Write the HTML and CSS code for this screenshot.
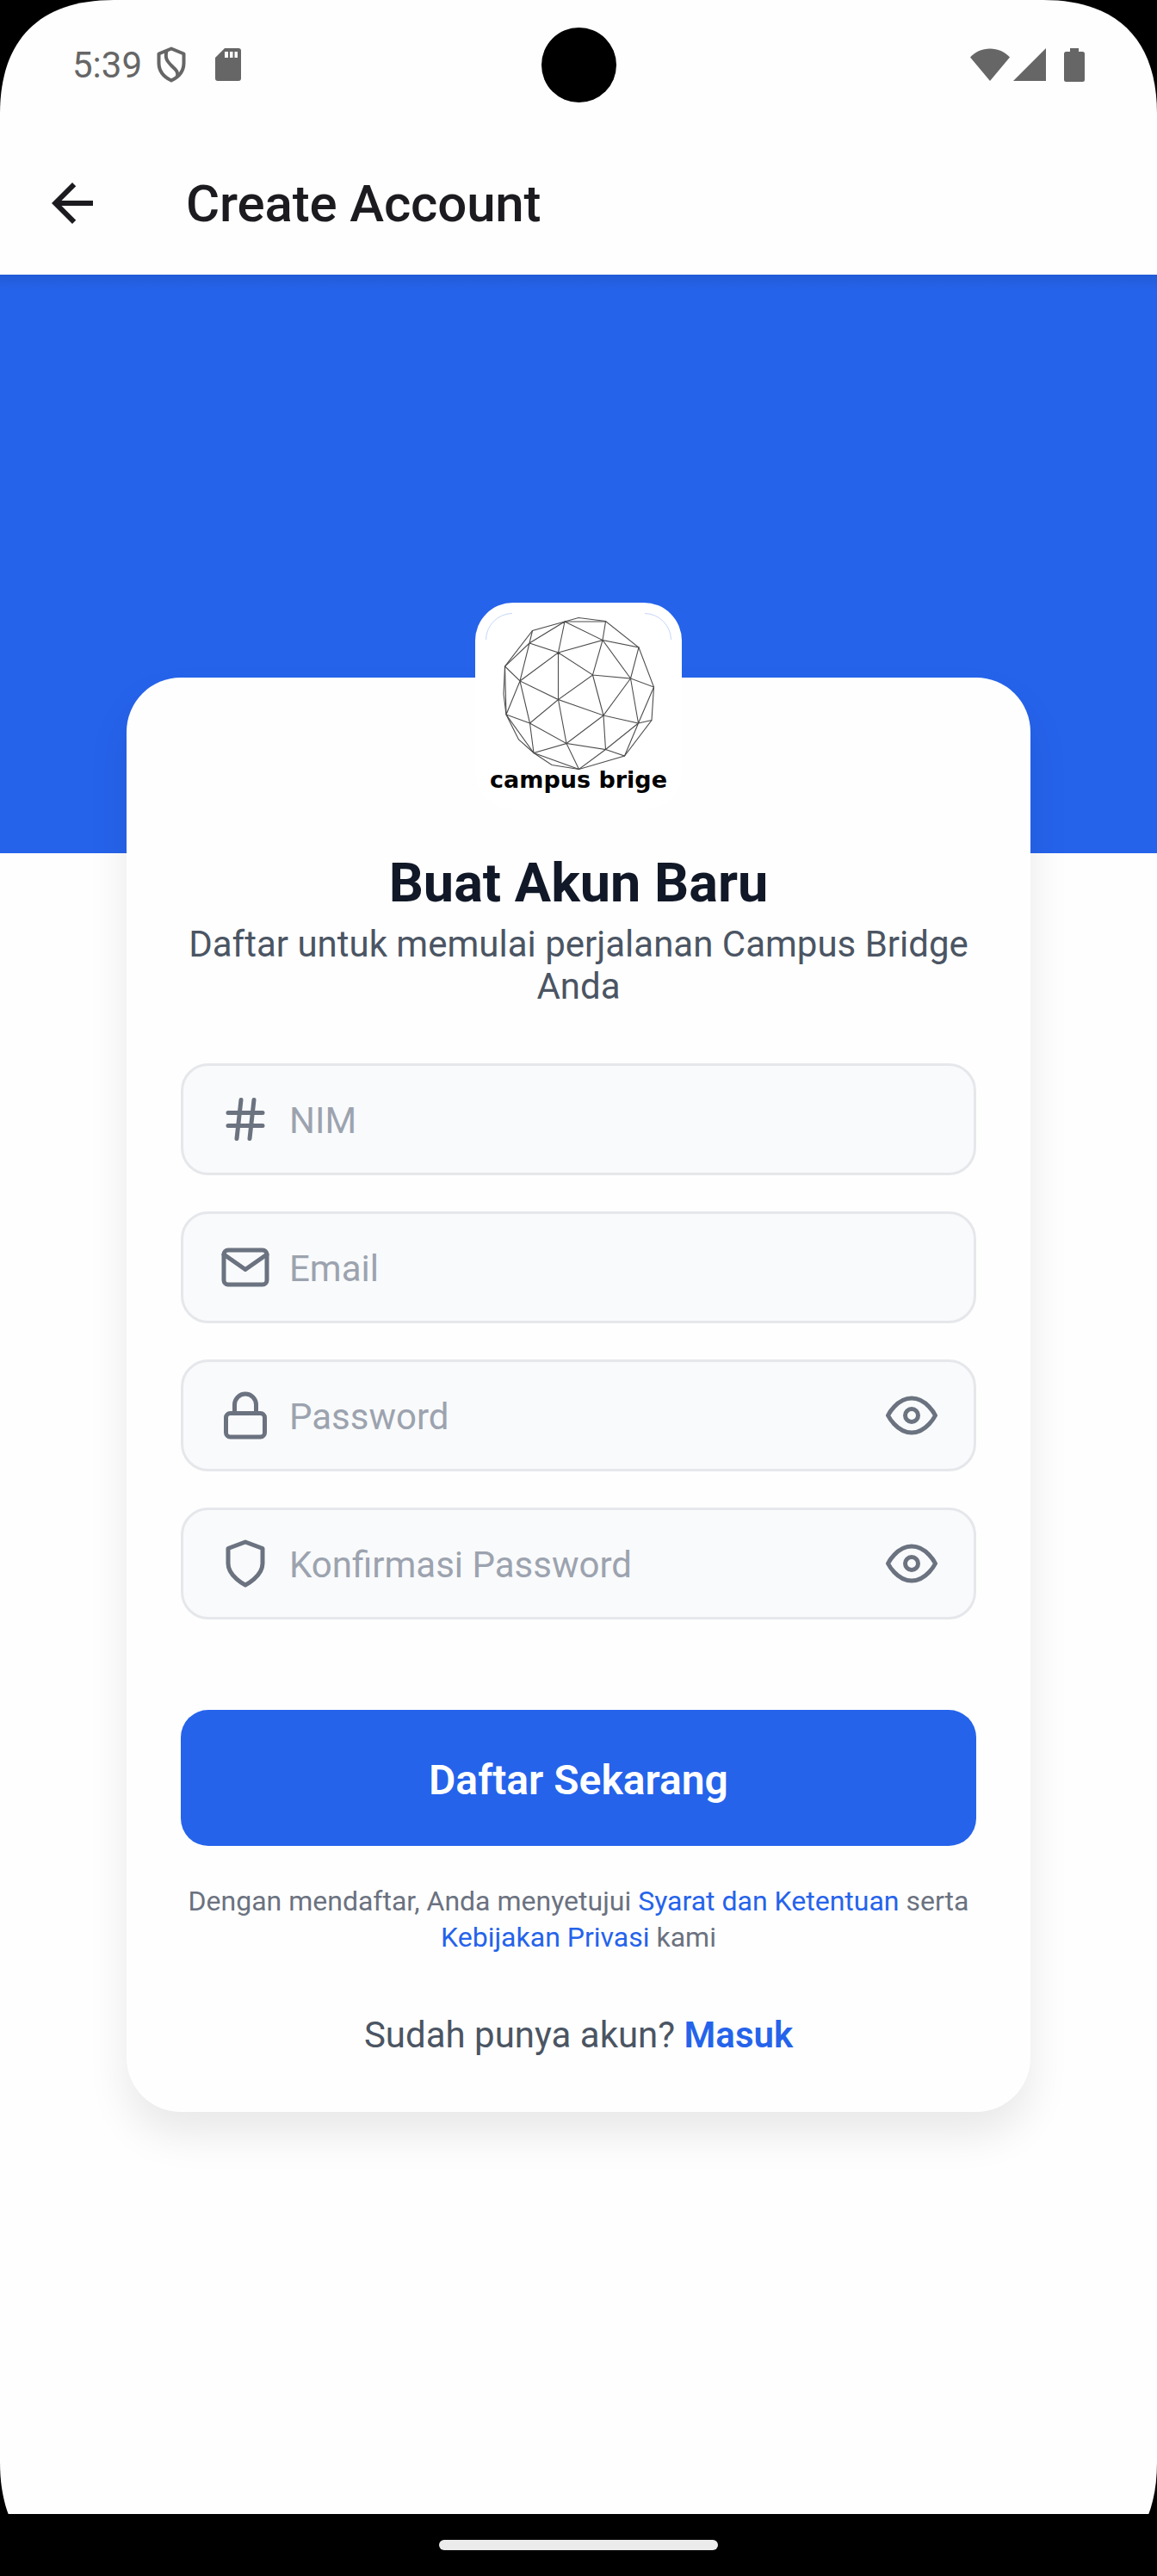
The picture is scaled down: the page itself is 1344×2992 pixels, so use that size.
FILE: index.html
```html
<!DOCTYPE html>
<html lang="id">
<head>
<meta charset="utf-8">
<title>Create Account</title>
<link rel="stylesheet" href="styles.css">
</head>
<body>
<div class="device">
<div class="screen">
  <header class="status-bar">
    <div class="status-left">
      <span class="clock">5:39</span>
      <svg class="status-shield" width="34" height="42" viewBox="0 0 34 42" fill="none" stroke="#666" stroke-width="4" stroke-linejoin="round"><path d="M17 2.500 31.500 8.500V19c0 9.500-6 16.500-14.500 20.500C8.500 35.500 2.500 28.500 2.500 19V8.500z"/><path d="M11.500 5c-2.500 10 2 13.500 7 18.500 4.500 4 6.500 6.500 5.500 11"/></svg>
      <svg class="status-sd" width="30" height="38" viewBox="0 0 30 38"><path fill="#666" d="M11 0h16a3 3 0 0 1 3 3v32a3 3 0 0 1-3 3H3a3 3 0 0 1-3-3V11z"/><path fill="#fefefe" d="M11 4h4v7h-4zM17 4h3.500v7H17zM22.500 4H26v7h-3.500z"/></svg>
    </div>
    <div class="status-right">
      <svg width="46" height="38" viewBox="0 0 46 38"><path fill="#666" d="M0 10.500C6 4 14 .5 23 .5s17 3.500 23 10L23 38z"/></svg>
      <svg width="38" height="38" viewBox="0 0 38 38"><path fill="#666" d="M38 0v38H0z"/></svg>
      <svg class="battery" width="24" height="39" viewBox="0 0 24 39"><path fill="#666" d="M7 0h10v4h4.500A2.500 2.500 0 0 1 24 6.500v30a2.500 2.500 0 0 1-2.500 2.500h-19A2.500 2.500 0 0 1 0 36.500v-30A2.500 2.500 0 0 1 2.500 4H7z"/></svg>
    </div>
    <div class="camera"></div>
  </header>
  <nav class="app-bar">
    <svg width="72" height="72" viewBox="0 0 24 24"><path fill="#1c1b1f" d="M20 11H7.830l5.590-5.590L12 4l-8 8 8 8 1.410-1.410L7.830 13H20v-2z"/></svg>
    <h1 class="app-title">Create Account</h1>
  </nav>
  <main class="content">
    <div class="hero"></div>
    <section class="card">
      <div class="logo">
        <svg width="240" height="240" viewBox="0 0 240 240">
          <path d="M12.500 43A31 31 0 0 1 43 12.500M197 12.500A31 31 0 0 1 227.500 43" fill="none" stroke="#c5d6fa"/>
          <g fill="none" stroke="#4d4d4d" stroke-width="1.100">
            <path d="M104 22 120 17.500 151.500 21.500 190 52 207.500 98 205 136.500 173.500 178 120.500 193.500 89 188.500 68 174.500 50.500 159 36 130 33 106 34.500 74 66.500 32.500z"/>
            <path d="M104 22H151.500L148 43.500 190 52 180.500 88 207.500 98 189.500 140 205 136.500M104 22 148 43.500 96.500 58 104 22 63 47 34.500 74 52 91 63 47 66.500 32.500M63 47 96.500 58 52 91 96.500 112.500V58L136.500 84 148 43.500 180.500 88 136.500 84 96.500 112.500 149 131 136.500 84M180.500 88 149 131 189.500 140zM149 131 106 163.500 96.500 112.500 63.500 140 52 91 36 130 63.500 140 106 163.500 68 174.500 63.500 140M149 131 151.500 170.500 106 163.500 120.500 193.500 151.500 170.500 189.500 140 173.500 178 151.500 170.500M120.500 193.500 68 174.500 36 130 34.500 74"/>
          </g>
          <text class="wordmark" x="17" y="215" textLength="206" lengthAdjust="spacingAndGlyphs">campus brige</text>
        </svg>
      </div>
      <h2 class="title">Buat Akun Baru</h2>
      <p class="subtitle">Daftar untuk memulai perjalanan Campus Bridge Anda</p>
      <div class="fields">
        <div class="field">
          <svg class="icon" viewBox="0 0 24 24"><path d="M4 9h16M4 15h16M10 3 8 21M16 3l-2 18"/></svg>
          <span class="placeholder">NIM</span>
        </div>
        <div class="field">
          <svg class="icon" viewBox="0 0 24 24"><path d="M4 4h16c1.100 0 2 .9 2 2v12c0 1.100-.9 2-2 2H4c-1.100 0-2-.9-2-2V6c0-1.100.9-2 2-2z"/><path d="m22 6-10 7L2 6"/></svg>
          <span class="placeholder">Email</span>
        </div>
        <div class="field">
          <svg class="icon" viewBox="0 0 24 24"><rect x="3" y="11" width="18" height="11" rx="2"/><path d="M7 11V7a5 5 0 0 1 10 0v4"/></svg>
          <span class="placeholder">Password</span>
          <svg class="icon" viewBox="0 0 24 24"><path d="M1 12s4-8 11-8 11 8 11 8-4 8-11 8-11-8-11-8z"/><circle cx="12" cy="12" r="3"/></svg>
        </div>
        <div class="field">
          <svg class="icon" viewBox="0 0 24 24"><path d="M12 22s8-4 8-10V5l-8-3-8 3v7c0 6 8 10 8 10z"/></svg>
          <span class="placeholder">Konfirmasi Password</span>
          <svg class="icon" viewBox="0 0 24 24"><path d="M1 12s4-8 11-8 11 8 11 8-4 8-11 8-11-8-11-8z"/><circle cx="12" cy="12" r="3"/></svg>
        </div>
      </div>
      <button class="submit">Daftar Sekarang</button>
      <p class="terms">Dengan mendaftar, Anda menyetujui <a>Syarat dan Ketentuan</a> serta<br><a>Kebijakan Privasi</a> kami</p>
      <p class="login">Sudah punya akun? <a>Masuk</a></p>
    </section>
  </main>
</div>
<footer class="gesture-bar"><div class="pill"></div></footer>
</div>
</body>
</html>
```

FILE: styles.css
```css
* { box-sizing: border-box; }
body { margin: 0; background: #000; font-family: Roboto, "Liberation Sans", sans-serif; }
h1, h2, p { margin: 0; }
svg { display: block; flex: none; }

/* Smoothed display corners */
.device { width: 1344px; height: 2992px; clip-path: path("M0 132C0 46 46 0 132 0H1212C1298 0 1344 46 1344 132V2860C1344 2946 1298 2992 1212 2992H132C46 2992 0 2946 0 2860Z"); background: #000; display: flex; flex-direction: column; }
.screen { flex: 1; background: #fefefe; display: flex; flex-direction: column; }

.status-bar { position: relative; height: 152px; padding: 0 84px; display: flex; justify-content: space-between; }
.status-left, .status-right { height: 150px; display: flex; align-items: center; }
.clock { width: 98px; padding-top: 2px; font-size: 42px; line-height: 50px; color: #666; }
.status-sd { margin-left: 34px; }
.status-right { gap: 4px; }
.battery { margin-left: 17px; }
.camera { position: absolute; left: 629px; top: 32px; width: 87px; height: 87px; border-radius: 50%; background: #000; }

.app-bar { height: 167px; padding: 0 48px; display: flex; align-items: center; gap: 96px; }
.app-title { padding-top: 3px; font-size: 60px; font-weight: 500; line-height: 70px; letter-spacing: -.15px; color: #1c1b1f; }

.content { flex: 1; display: flex; flex-direction: column; align-items: center; }
.hero { width: 100%; height: 672px; background: linear-gradient(#215bd6, #2563eb 18px); }

.card { position: relative; width: 1050px; height: 1666px; margin-top: -204px; padding: 0 63px; border-radius: 63px; background: #fefefe; box-shadow: 0 27px 48px rgba(0, 0, 0, .085); display: flex; flex-direction: column; align-items: center; }
.logo { width: 240px; height: 240px; margin-top: -87px; border-radius: 44px; background: #fff; flex: none; }
.wordmark { font: bold 26px "DejaVu Sans", sans-serif; fill: #000; }
.title { margin-top: 49px; font-size: 63px; font-weight: 700; line-height: 74px; color: #111827; white-space: nowrap; }
.subtitle { width: 924px; margin-top: 9px; font-size: 42px; line-height: 49px; color: #4b5563; text-align: center; }

.fields { width: 924px; margin-top: 65px; display: flex; flex-direction: column; gap: 42px; }
.field { height: 130px; padding: 0 42px; border: 3px solid #e5e7eb; border-radius: 32px; background: #f9fafb; display: flex; align-items: center; gap: 21px; }
.icon { width: 60px; height: 60px; fill: none; stroke: #6b7280; stroke-width: 2; stroke-linecap: round; stroke-linejoin: round; }
.placeholder { flex: 1; padding-top: 3px; font-size: 42px; line-height: 50px; color: #9ca3af; }

.submit { width: 924px; height: 158px; margin-top: 105px; padding: 5px 0 0; border: 0; border-radius: 32px; background: #2563eb; color: #fff; font: 600 48px Roboto, sans-serif; flex: none; }
.terms { margin-top: 43px; font-size: 32px; line-height: 42px; color: #6b7280; text-align: center; white-space: nowrap; }
.terms a, .login a { color: #2563eb; }
.login { margin-top: 68px; font-size: 42px; line-height: 50px; color: #4b5563; white-space: nowrap; }
.login a { font-weight: 600; }

.gesture-bar { height: 72px; background: #000; display: flex; align-items: center; justify-content: center; }
.pill { width: 324px; height: 12px; border-radius: 6px; background: #ebebeb; }
```
